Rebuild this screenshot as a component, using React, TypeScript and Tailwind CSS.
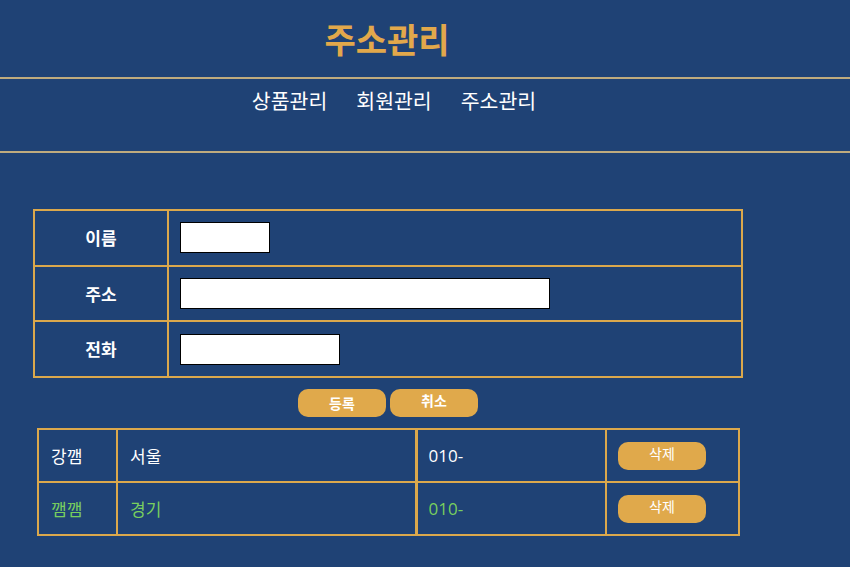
const font = { fontFamily: '"Noto Sans CJK KR", "Noto Sans", sans-serif' }

const rows = [
  { name: '강깸', addr: '서울', tel: '010-', green: false },
  { name: '깸깸', addr: '경기', tel: '010-', green: true },
]

const fields = [
  { label: '이름', width: 'w-[90px]' },
  { label: '주소', width: 'w-[370px]' },
  { label: '전화', width: 'w-[160px]' },
]

export default function App() {
  return (
    <div className="min-h-[567px] w-full bg-[#1f4275]" style={font}>
      <header className="flex h-[77px] items-center justify-center pr-[76px]">
        <h1 className="text-[34px] font-bold text-[#e2a84b]">주소관리</h1>
      </header>
      <nav className="flex h-[76px] justify-center gap-[29px] border-y-2 border-[#bfab7e] pr-[62px] pt-[6px] text-[20.5px] text-white">
        <a>상품관리</a>
        <a>회원관리</a>
        <a>주소관리</a>
      </nav>

      <div className="pl-[33px] pt-[56px]">
        <table className="w-[710px] border-collapse">
          <tbody>
            {fields.map((f) => (
              <tr key={f.label} className="h-[55.7px]">
                <th className="w-[134px] border-2 border-[#dba84c] text-[17px] font-bold text-white">
                  {f.label}
                </th>
                <td className="border-2 border-[#dba84c] pl-[11px]">
                  <input
                    className={`${f.width} block h-[31px] border border-black bg-white`}
                  />
                </td>
              </tr>
            ))}
          </tbody>
        </table>

        <div className="flex w-[710px] justify-center gap-[4px] pt-[11px]">
          <button className="h-[28px] w-[88px] rounded-[10px] bg-[#e0a94b] text-[14px] font-bold text-white">
            등록
          </button>
          <button className="h-[28px] w-[88px] rounded-[10px] bg-[#e0a94b] pb-[6px] text-[14px] font-bold text-white">
            취소
          </button>
        </div>

        <table className="ml-[4px] mt-[11px] w-[703px] border-collapse">
          <tbody>
            {rows.map((r, i) => (
              <tr
                key={i}
                className={`h-[53px] text-[17px] ${r.green ? 'text-[#78cf5e]' : 'text-white'}`}
              >
                <td className="w-[79px] border-2 border-[#dba84c] pl-[12px]">{r.name}</td>
                <td className="w-[299px] border-2 border-r-[3px] border-[#dba84c] pl-[12px]">
                  {r.addr}
                </td>
                <td className="w-[190px] border-2 border-[#dba84c] pl-[11px]" style={{ fontFamily: '"Open Sans", sans-serif' }}>
                  {r.tel}
                </td>
                <td className="border-2 border-[#dba84c] pl-[11px]">
                  <button className="block h-[28px] w-[88px] rounded-[10px] bg-[#e0a94b] pb-[4px] text-[14px] text-white">
                    삭제
                  </button>
                </td>
              </tr>
            ))}
          </tbody>
        </table>
      </div>
    </div>
  )
}
